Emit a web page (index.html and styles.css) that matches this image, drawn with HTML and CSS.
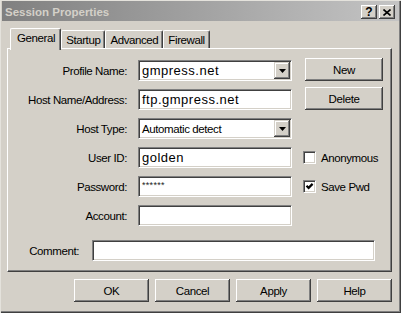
FILE: index.html
```html
<!DOCTYPE html>
<html>
<head>
<meta charset="utf-8">
<title>Session Properties</title>
<link rel="stylesheet" href="styles.css">
</head>
<body>
<div class="window">
  <div class="titlebar">
    <span class="title">Session Properties</span>
    <div class="tbtns">
      <span class="tbtn help">?</span>
      <span class="tbtn close"><svg width="8" height="7" viewBox="0 0 8 7"><path d="M0.5 0.5 L7.5 6.5 M7.5 0.5 L0.5 6.5" stroke="#000" stroke-width="1.6" fill="none"/></svg></span>
    </div>
  </div>
  <div class="content">
    <div class="tabs">
      <div class="tab active">General</div>
      <div class="tab">Startup</div>
      <div class="tab">Advanced</div>
      <div class="tab">Firewall</div>
    </div>
    <div class="panel">
      <div class="form">
        <label class="lbl">Profile Name:</label>
        <div class="field combo big"><span class="val">gmpress.net</span><span class="drop"><svg width="7" height="4" viewBox="0 0 7 4"><path d="M0 0 H7 L3.5 4 Z" fill="#000"/></svg></span></div>
        <button class="btn side">New</button>

        <label class="lbl">Host Name/Address:</label>
        <div class="field big">ftp.gmpress.net</div>
        <button class="btn side">Delete</button>

        <label class="lbl">Host Type:</label>
        <div class="field combo"><span class="val">Automatic detect</span><span class="drop"><svg width="7" height="4" viewBox="0 0 7 4"><path d="M0 0 H7 L3.5 4 Z" fill="#000"/></svg></span></div>
        <div></div>

        <label class="lbl">User ID:</label>
        <div class="field big">golden</div>
        <div class="check"><span class="box"></span>Anonymous</div>

        <label class="lbl">Password:</label>
        <div class="field pwd">******</div>
        <div class="check"><span class="box"><svg width="9" height="9" viewBox="0 0 9 9"><path d="M1.5 3.8 L3.6 5.9 L7.6 1.9" stroke="#000" stroke-width="2.2" fill="none"/></svg></span>Save Pwd</div>

        <label class="lbl">Account:</label>
        <div class="field"></div>
        <div></div>
      </div>
      <div class="comment-row">
        <label class="lbl">Comment:</label>
        <div class="field wide"></div>
      </div>
    </div>
    <div class="actions">
      <button class="btn">OK</button>
      <button class="btn">Cancel</button>
      <button class="btn">Apply</button>
      <button class="btn">Help</button>
    </div>
  </div>
</div>
</body>
</html>
```
FILE: styles.css
```css
* { box-sizing: border-box; }
html, body { margin: 0; padding: 0; }
body {
  width: 401px;
  height: 313px;
  overflow: hidden;
  background: #d4d0c8;
  font-family: "Liberation Sans", Arial, sans-serif;
  font-size: 11.5px;
  letter-spacing: -0.4px;
  color: #000;
}
.window {
  width: 401px;
  height: 313px;
  padding: 1px 2px 0 2px;
  background: #d4d0c8;
  box-shadow: inset 1px 1px #e4e2dc, inset -1px -1px #404040, inset -2px -2px #808080;
}
.titlebar {
  height: 20px;
  display: flex;
  align-items: center;
  padding: 2px 4px 0 3px;
  background: linear-gradient(to right, #808080, #c4c4c4);
}
.title {
  flex: 1;
  font-weight: bold;
  color: #d4d0c8;
  letter-spacing: 0;
}
.tbtns { display: flex; gap: 2px; }
.tbtn {
  width: 16px;
  height: 14px;
  background: #d4d0c8;
  box-shadow: inset -1px -1px #404040, inset 1px 1px #fff, inset -2px -2px #808080;
  display: flex;
  align-items: center;
  justify-content: center;
}
.tbtn.help {
  font-weight: bold;
  font-size: 12px;
  letter-spacing: 0;
  line-height: 1;
}
.content { padding: 7px 7px 0 5px; }
.tabs {
  display: flex;
  align-items: flex-end;
  height: 20px;
  padding-left: 3px;
}
.tab {
  height: 18px;
  padding: 0 4px;
  display: flex;
  align-items: center;
  border-left: 1px solid #fff;
  border-top: 1px solid #fff;
  border-right: 1px solid #404040;
  border-radius: 2px 2px 0 0;
  box-shadow: inset -1px 0 #808080;
  background: #d4d0c8;
}
.tab.active {
  height: 22px;
  margin-bottom: -2px;
  padding: 0 5px 3px 6px;
  position: relative;
  z-index: 1;
}
.panel {
  border: 1px solid;
  border-color: #fff #404040 #404040 #fff;
  box-shadow: inset -1px -1px #808080;
  padding: 11px 0 10px 0;
}
.form {
  display: grid;
  grid-template-columns: 119px 154px 88px;
  column-gap: 11px;
  row-gap: 8px;
  grid-auto-rows: 21px;
}
.lbl {
  align-self: center;
  text-align: right;
  white-space: nowrap;
}
.field {
  height: 21px;
  background: #fff;
  border: 1px solid;
  border-color: #808080 #fff #fff #808080;
  box-shadow: inset 1px 1px #404040, inset -1px -1px #d4d0c8;
  display: flex;
  align-items: center;
  padding: 0 1px 0 3px;
  white-space: nowrap;
  overflow: hidden;
}
.big { font-size: 13px; letter-spacing: 0.5px; }
.pwd {
  align-items: flex-start;
  padding-top: 3px;
  font-size: 9px;
  letter-spacing: 0.3px;
  color: #222;
}
.combo .val { flex: 1; }
.drop {
  width: 16px;
  height: 17px;
  background: #d4d0c8;
  box-shadow: inset -1px -1px #404040, inset 1px 1px #d4d0c8, inset -2px -2px #808080, inset 2px 2px #fff;
  display: flex;
  align-items: center;
  justify-content: center;
}
.btn {
  font: inherit;
  letter-spacing: inherit;
  color: #000;
  background: #d4d0c8;
  border: none;
  padding: 0;
  height: 23px;
  box-shadow: inset -1px -1px #404040, inset 1px 1px #fff, inset -2px -2px #808080;
}
.btn.side {
  width: 78px;
  margin-left: 2px;
  margin-top: -2px;
  align-self: start;
}
.check {
  display: flex;
  align-items: center;
  gap: 5px;
}
.box {
  width: 13px;
  height: 13px;
  background: #fff;
  border: 1px solid;
  border-color: #808080 #fff #fff #808080;
  box-shadow: inset 1px 1px #404040, inset -1px -1px #d4d0c8;
  display: flex;
  align-items: center;
  justify-content: center;
}
.comment-row {
  display: flex;
  align-items: center;
  margin-top: 14px;
}
.comment-row .lbl { width: 71px; }
.field.wide { width: 283px; margin-left: 13px; }
.actions {
  display: flex;
  justify-content: flex-end;
  gap: 6px;
  margin-top: 7px;
}
.actions .btn { width: 75px; }
```
